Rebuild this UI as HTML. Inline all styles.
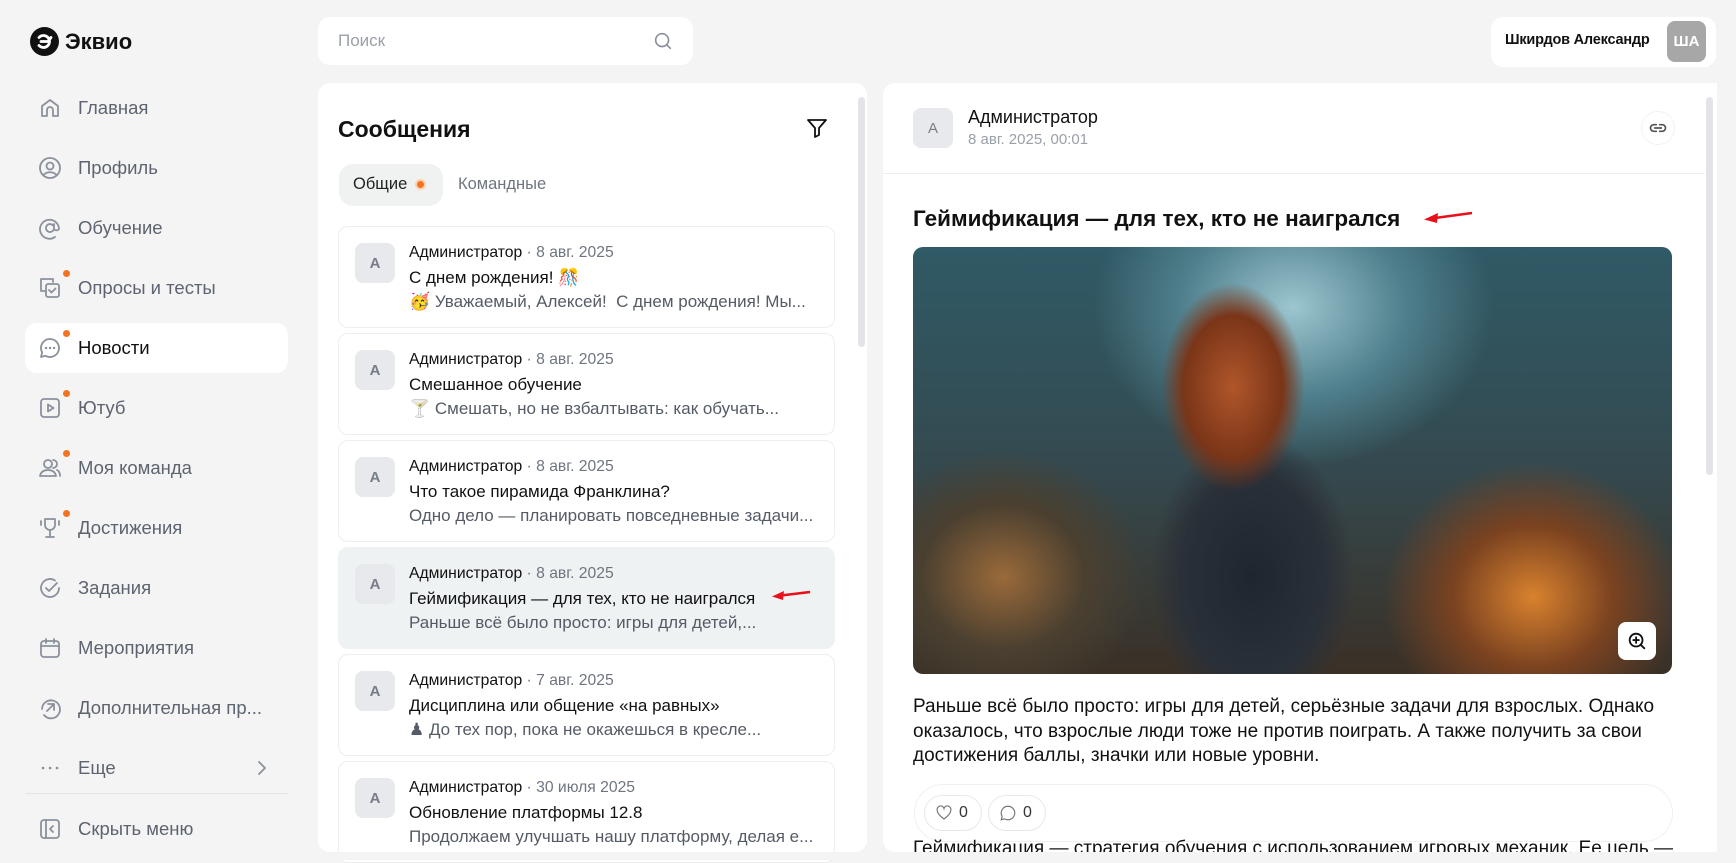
<!DOCTYPE html>
<html><head><meta charset="utf-8">
<style>
*{box-sizing:border-box;margin:0;padding:0}
body{width:1736px;height:860px;overflow:hidden;background:#f4f4f4;font-family:"Liberation Sans","DejaVu Sans",sans-serif;position:relative;color:#111}
.abs{position:absolute}
.nav{position:absolute;left:25px;width:263px;height:50px;border-radius:12px;display:flex;align-items:center;font-size:18.5px;color:#5d6470}
.nav svg{position:absolute;left:13px;top:13px;width:24px;height:24px;fill:none;stroke:#8b919c;stroke-width:1.8;stroke-linecap:round;stroke-linejoin:round}
.nav span{position:absolute;left:53px}
.dot{position:absolute;left:38px;top:7px;width:7px;height:7px;border-radius:50%;background:#f47321}
.card{position:absolute;left:338px;width:497px;height:102px;border:1px solid #eceef0;border-radius:10px;background:#fff}
.card.sel{background:#eef2f2;border-color:#eef2f2}
.av{position:absolute;left:16px;top:16px;width:40px;height:40px;border-radius:8px;background:#e8e9ec;color:#777d88;font-size:15px;font-weight:bold;display:flex;align-items:center;justify-content:center}
.card .l1{position:absolute;left:70px;top:17px;font-size:15.7px;color:#111;white-space:nowrap}
.card .l1 i{font-style:normal;color:#6f7580}
.card .l2{position:absolute;left:70px;top:41px;font-size:17px;color:#111;white-space:nowrap}
.card .l3{position:absolute;left:70px;top:65px;font-size:17px;color:#555b66;white-space:nowrap}
</style></head><body>
<div class="abs" style="left:30px;top:27px;width:29px;height:29px;border-radius:50%;background:#111"></div>
<svg class="abs" style="left:30px;top:27px" width="29" height="29" viewBox="0 0 29 29"><path d="M9 10.5a6 6 0 1 1 0 8M11 14.5h7l3-4" fill="none" stroke="#fff" stroke-width="2.8" stroke-linecap="round"/></svg>
<div class="abs" style="left:65px;top:29px;font-size:22px;font-weight:bold;color:#111">Эквио</div>

<div class="nav" style="top:83px"><svg viewBox="0 0 24 24"><path d="M4 20V10l8-6 8 6v10h-5v-6a3 3 0 0 0-6 0v6z"/></svg><span>Главная</span></div>
<div class="nav" style="top:143px"><svg viewBox="0 0 24 24"><circle cx="12" cy="12" r="10"/><circle cx="12" cy="10" r="3.5"/><path d="M6 18.5c3-3 9-3 12 0"/></svg><span>Профиль</span></div>
<div class="nav" style="top:203px"><svg viewBox="0 0 24 24"><path d="M16 12a4 4 0 1 1-1-2.6M16 8v5a3 3 0 0 0 5 0 9.5 9.5 0 1 0-4 8"/></svg><span>Обучение</span></div>
<div class="nav" style="top:263px"><div class="dot"></div><svg viewBox="0 0 24 24"><path d="M15 6V3H3v12h4"/><rect x="8" y="8" width="13" height="13" rx="2"/><path d="M11 14l2.5 2.5 4-4"/></svg><span>Опросы и тесты</span></div>
<div class="nav" style="top:323px;background:#fff;color:#111"><div class="dot"></div><svg viewBox="0 0 24 24"><path d="M12 3a9 9 0 1 1-4.5 16.8L3 21l1.2-4.5A9 9 0 0 1 12 3z"/><path d="M8 12h.1M12 12h.1M16 12h.1" stroke-width="2.4"/></svg><span>Новости</span></div>
<div class="nav" style="top:383px"><div class="dot"></div><svg viewBox="0 0 24 24"><rect x="3" y="3" width="18" height="18" rx="3"/><path d="M10 8.5v7l5.5-3.5z"/></svg><span>Ютуб</span></div>
<div class="nav" style="top:443px"><div class="dot"></div><svg viewBox="0 0 24 24"><circle cx="10" cy="8" r="4"/><path d="M2 20c1-5 5-6 8-6s7 1 8 6zM15 4a4 4 0 0 1 0 8M19 14c2 1 3 3 3 6"/></svg><span>Моя команда</span></div>
<div class="nav" style="top:503px"><div class="dot"></div><svg viewBox="0 0 24 24"><path d="M7 3h10v6a5 5 0 0 1-10 0zM12 14v6M8 21h8M3 5v4M21 5v4"/></svg><span>Достижения</span></div>
<div class="nav" style="top:563px"><svg viewBox="0 0 24 24"><path d="M21 12a9 9 0 1 1-4-7.5"/><path d="M8 12l3 3 8-8"/></svg><span>Задания</span></div>
<div class="nav" style="top:623px"><svg viewBox="0 0 24 24"><rect x="3" y="5" width="18" height="16" rx="3"/><path d="M3 10h18M8 3v4M16 3v4"/></svg><span>Мероприятия</span></div>
<div class="nav" style="top:683px"><svg viewBox="0 0 24 24"><path d="M6 19a9 9 0 1 0-2-6"/><path d="M9 15l7-7M10 8h6v6"/></svg><span>Дополнительная пр...</span></div>
<div class="nav" style="top:743px"><svg viewBox="0 0 24 24"><path d="M5 12h.1M12 12h.1M19 12h.1" stroke-width="2.6"/></svg><span>Еще</span><svg viewBox="0 0 24 24" style="left:225px"><path d="M9 6l6 6-6 6"/></svg></div>
<div class="abs" style="left:26px;top:793px;width:262px;height:1px;background:#e2e3e6"></div>
<div class="nav" style="top:804px"><svg viewBox="0 0 24 24"><rect x="3" y="3" width="18" height="18" rx="3"/><path d="M8 3v18M15 9l-3 3 3 3"/></svg><span>Скрыть меню</span></div>

<div class="abs" style="left:318px;top:17px;width:375px;height:48px;border-radius:12px;background:#fff"></div>
<div class="abs" style="left:338px;top:31px;font-size:17px;color:#9ba0a8">Поиск</div>
<svg class="abs" style="left:652px;top:30px" width="22" height="22" viewBox="0 0 24 24" fill="none" stroke="#8b919c" stroke-width="1.8" stroke-linecap="round"><circle cx="11" cy="11" r="7"/><path d="M16 16l4 4"/></svg>

<div class="abs" style="left:1491px;top:17px;width:225px;height:50px;border-radius:12px;background:#fff"></div>
<div class="abs" style="left:1505px;top:32px;font-size:14.5px;font-weight:bold;color:#111;letter-spacing:-0.2px">Шкирдов Александр</div>
<div class="abs" style="left:1667px;top:21px;width:39px;height:41px;border-radius:8px;background:#a7a7a7;color:#fff;font-size:15px;font-weight:bold;display:flex;align-items:center;justify-content:center">ША</div>

<div class="abs" style="left:318px;top:83px;width:549px;height:769px;border-radius:12px;background:#fff"></div>
<div class="abs" style="left:858px;top:97px;width:7px;height:250px;border-radius:4px;background:#e3e4e8"></div>
<div class="abs" style="left:338px;top:116px;font-size:23px;font-weight:bold">Сообщения</div>
<svg class="abs" style="left:805px;top:116px" width="24" height="24" viewBox="0 0 24 24" fill="none" stroke="#111" stroke-width="1.8" stroke-linejoin="round"><path d="M3 4h18l-7 8v7l-4 2v-9z"/></svg>
<div class="abs" style="left:339px;top:164px;width:104px;height:42px;border-radius:14px;background:#f0f2f2"></div>
<div class="abs" style="left:353px;top:175px;font-size:16.5px;color:#222">Общие</div>
<div class="abs" style="left:415px;top:179px;width:11px;height:11px;border-radius:50%;background:#f47321;border:2px solid #fbd2b5"></div>
<div class="abs" style="left:458px;top:175px;font-size:16.5px;color:#6f7580">Командные</div>

<div class="card" style="top:226px"><div class="av">A</div><div class="l1">Администратор <i>· 8 авг. 2025</i></div><div class="l2">С днем рождения! 🎊</div><div class="l3">🥳 Уважаемый, Алексей!&nbsp; С днем рождения! Мы...</div></div>
<div class="card" style="top:333px"><div class="av">A</div><div class="l1">Администратор <i>· 8 авг. 2025</i></div><div class="l2">Смешанное обучение</div><div class="l3">🍸 Смешать, но не взбалтывать: как обучать...</div></div>
<div class="card" style="top:440px"><div class="av">A</div><div class="l1">Администратор <i>· 8 авг. 2025</i></div><div class="l2">Что такое пирамида Франклина?</div><div class="l3">Одно дело — планировать повседневные задачи...</div></div>
<div class="card sel" style="top:547px"><div class="av">A</div><div class="l1">Администратор <i>· 8 авг. 2025</i></div><div class="l2">Геймификация — для тех, кто не наигрался</div><div class="l3">Раньше всё было просто: игры для детей,...</div>
<svg class="abs" style="left:432px;top:41px" width="40" height="12" viewBox="0 0 40 12"><path d="M39 3L10 6.5" stroke="#e8101a" stroke-width="2.5"/><path d="M1 7.5L13 2l-1 9z" fill="#e8101a"/></svg></div>
<div class="card" style="top:654px"><div class="av">A</div><div class="l1">Администратор <i>· 7 авг. 2025</i></div><div class="l2">Дисциплина или общение «на равных»</div><div class="l3">♟ До тех пор, пока не окажешься в кресле...</div></div>
<div class="card" style="top:761px"><div class="av">A</div><div class="l1">Администратор <i>· 30 июля 2025</i></div><div class="l2">Обновление платформы 12.8</div><div class="l3">Продолжаем улучшать нашу платформу, делая е...</div></div>
<div class="abs" style="left:318px;top:852px;width:560px;height:8px;background:#f4f4f4"></div>

<div class="abs" style="left:883px;top:83px;width:822px;height:769px;border-radius:12px 0 0 12px;background:#fff;overflow:hidden">
 <div class="abs" style="left:30px;top:25px;width:40px;height:40px;border-radius:8px;background:#e8e9ec;color:#777d88;font-size:15px;display:flex;align-items:center;justify-content:center">A</div>
 <div class="abs" style="left:85px;top:24px;font-size:18px;color:#111">Администратор</div>
 <div class="abs" style="left:85px;top:48px;font-size:15px;color:#9a9fa8">8 авг. 2025, 00:01</div>
 <div class="abs" style="left:758px;top:28px;width:34px;height:34px;border-radius:50%;border:1px solid #f1f1f1"></div>
 <svg class="abs" style="left:765px;top:35px" width="20" height="20" viewBox="0 0 24 24" fill="none" stroke="#555" stroke-width="2" stroke-linecap="round"><path d="M10 8H7a4 4 0 0 0 0 8h3M14 8h3a4 4 0 0 1 0 8h-3M8 12h8"/></svg>
 <div class="abs" style="left:0;top:90px;width:822px;height:1px;background:#eceef0"></div>
 <div class="abs" style="left:30px;top:123px;font-size:22.5px;font-weight:bold;color:#111">Геймификация — для тех, кто не наигрался</div>
 <svg class="abs" style="left:540px;top:127px" width="50" height="14" viewBox="0 0 50 14"><path d="M49 3L12 8" stroke="#e8101a" stroke-width="2.5"/><path d="M1 9.5L15 3l-1 10z" fill="#e8101a"/></svg>
 <div class="abs" style="left:30px;top:164px;width:759px;height:427px;border-radius:10px;overflow:hidden;background:
  radial-gradient(ellipse 90px 130px at 320px 140px,#b0562a 0%,#7a3518 55%,transparent 80%),
  radial-gradient(ellipse 120px 170px at 340px 330px,#1e2630 0%,#2a3038 60%,transparent 85%),
  radial-gradient(ellipse 200px 180px at 620px 350px,#d9822e 0%,#7a4220 40%,transparent 75%),
  radial-gradient(ellipse 180px 160px at 90px 330px,#9a6a3a 0%,#4b4030 45%,transparent 80%),
  radial-gradient(ellipse 250px 200px at 380px 60px,#9cc6d0 0%,#4f7f8c 45%,transparent 80%),
  linear-gradient(180deg,#2f5a66 0%,#344a50 50%,#3a3026 100%)">
  <div class="abs" style="left:705px;top:375px;width:38px;height:38px;border-radius:8px;background:#fff"></div>
  <svg class="abs" style="left:713px;top:383px" width="22" height="22" viewBox="0 0 24 24" fill="none" stroke="#111" stroke-width="2" stroke-linecap="round"><circle cx="11" cy="11" r="7"/><path d="M16 16l4 4M8 11h6M11 8v6"/></svg>
 </div>
 <div class="abs" style="left:30px;top:612px;width:770px;font-size:19px;line-height:24.5px;color:#111">Раньше всё было просто: игры для детей, серьёзные задачи для взрослых. Однако оказалось, что взрослые люди тоже не против поиграть. А также получить за свои достижения баллы, значки или новые уровни.</div>
 <div class="abs" style="left:31px;top:701px;width:759px;height:58px;border-radius:29px;border:1px solid #eef0f1"></div>
 <div class="abs" style="left:41px;top:712px;width:58px;height:36px;border-radius:18px;border:1px solid #e6e8ea;font-size:16px;color:#333;padding:8px 0 0 34px">0</div>
 <svg class="abs" style="left:52px;top:721px" width="18" height="18" viewBox="0 0 24 24" fill="none" stroke="#777" stroke-width="1.6"><path d="M12 20S3 14 3 8.5A4.5 4.5 0 0 1 12 6a4.5 4.5 0 0 1 9 2.5C21 14 12 20 12 20z"/></svg>
 <div class="abs" style="left:105px;top:712px;width:58px;height:36px;border-radius:18px;border:1px solid #e6e8ea;font-size:16px;color:#333;padding:8px 0 0 34px">0</div>
 <svg class="abs" style="left:116px;top:721px" width="18" height="18" viewBox="0 0 24 24" fill="none" stroke="#777" stroke-width="1.6"><path d="M12 3a9 9 0 1 1-4.5 16.8L3 21l1.2-4.5A9 9 0 0 1 12 3z"/></svg>
 <div class="abs" style="left:30px;top:755px;font-size:19px;color:#111;white-space:nowrap">Геймификация — стратегия обучения с использованием игровых механик. Ее цель —</div>
</div>
<div class="abs" style="left:1705px;top:83px;width:12px;height:769px;background:#fff"></div>
<div class="abs" style="left:1706px;top:97px;width:7px;height:378px;border-radius:4px;background:#e3e4e8"></div>
<div class="abs" style="left:880px;top:852px;width:856px;height:8px;background:#f4f4f4"></div>
</body></html>
